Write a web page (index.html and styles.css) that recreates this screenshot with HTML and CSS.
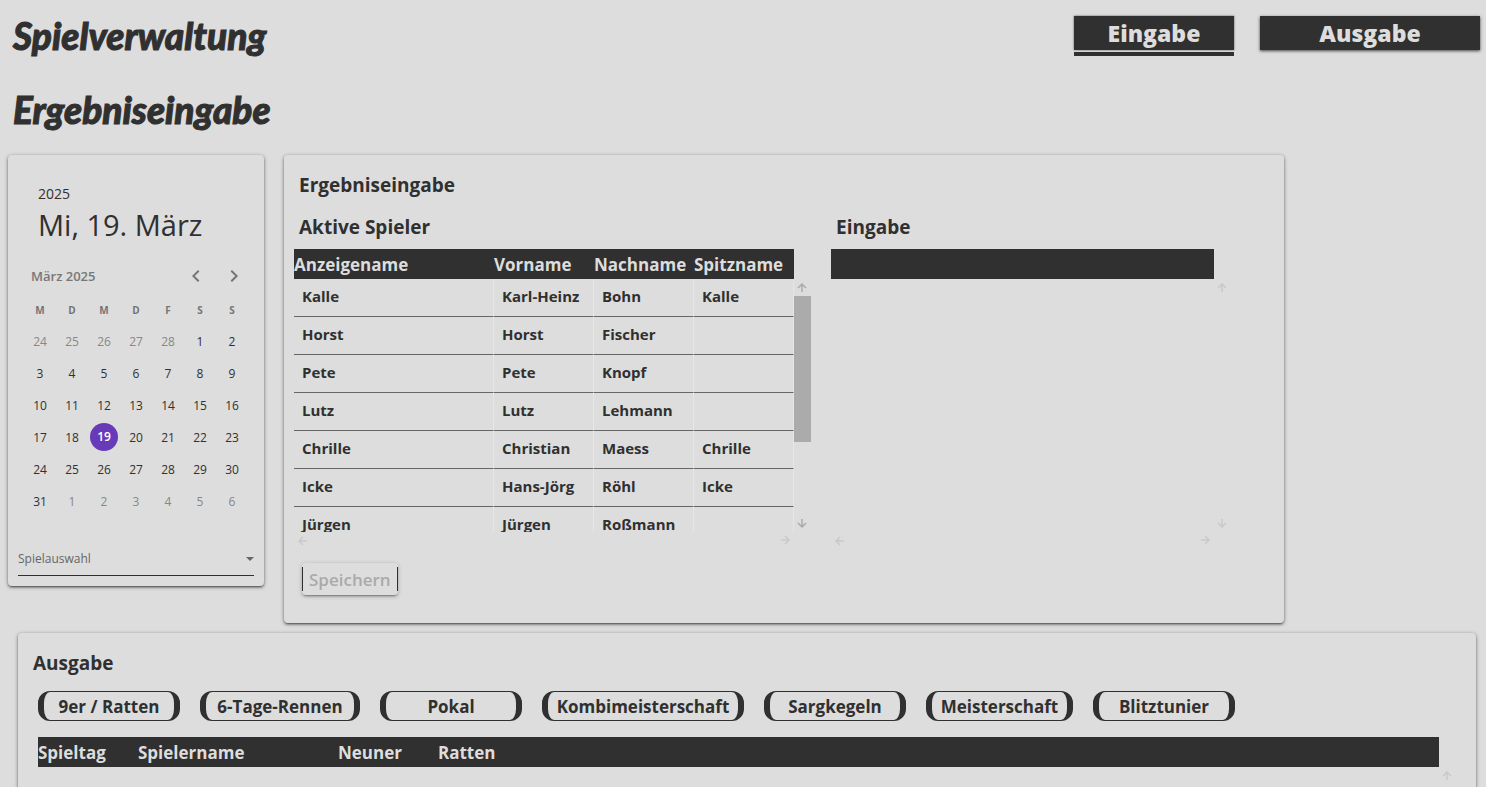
FILE: index.html
```html
<!DOCTYPE html>
<html lang="de">
<head>
<meta charset="utf-8">
<title>Spielverwaltung</title>
<link rel="stylesheet" href="styles.css">
</head>
<body>
<svg class="symbols" aria-hidden="true">
  <symbol id="arrow" viewBox="0 0 17 17"><path d="M8 13V5M4 9l4-4 4 4" fill="none" stroke="currentColor" stroke-width="1.5"/></symbol>
</svg>
<header class="top">
  <h1 class="title">Spielverwaltung</h1>
  <nav class="nav">
    <a class="tab tab-active" href="#eingabe"><span class="tab-face">Eingabe</span></a>
    <a class="tab tab-wide" href="#ausgabe"><span class="tab-face">Ausgabe</span></a>
  </nav>
</header>
<h2 class="title">Ergebniseingabe</h2>
<main>
  <div class="row">
    <section class="card calendar">
      <div class="date-head">
        <div class="year">2025</div>
        <div class="date">Mi, 19. März</div>
      </div>
      <div class="month-bar">
        <span class="month">März 2025</span>
        <button class="step" aria-label="Voriger Monat"><svg width="24" height="24" viewBox="0 0 24 24"><path d="M15.4 7.4 14 6l-6 6 6 6 1.4-1.4L10.8 12z"/></svg></button>
        <button class="step" aria-label="Nächster Monat"><svg width="24" height="24" viewBox="0 0 24 24"><path d="M10 6 8.600 7.400 13.200 12l-4.600 4.600L10 18l6-6z"/></svg></button>
      </div>
      <table class="days">
        <thead><tr><th>M</th><th>D</th><th>M</th><th>D</th><th>F</th><th>S</th><th>S</th></tr></thead>
        <tbody>
          <tr><td class="out">24</td><td class="out">25</td><td class="out">26</td><td class="out">27</td><td class="out">28</td><td>1</td><td>2</td></tr>
          <tr><td>3</td><td>4</td><td>5</td><td>6</td><td>7</td><td>8</td><td>9</td></tr>
          <tr><td>10</td><td>11</td><td>12</td><td>13</td><td>14</td><td>15</td><td>16</td></tr>
          <tr><td>17</td><td>18</td><td><span class="today">19</span></td><td>20</td><td>21</td><td>22</td><td>23</td></tr>
          <tr><td>24</td><td>25</td><td>26</td><td>27</td><td>28</td><td>29</td><td>30</td></tr>
          <tr><td>31</td><td class="out">1</td><td class="out">2</td><td class="out">3</td><td class="out">4</td><td class="out">5</td><td class="out">6</td></tr>
        </tbody>
      </table>
      <div class="picker">
        <select class="select" aria-label="Spielauswahl"><option>Spielauswahl</option></select>
        <svg class="caret" width="8" height="4" viewBox="0 0 8 4"><path d="M0 0h8L4 4z"/></svg>
      </div>
    </section>
    <section class="card entry" id="eingabe">
      <h3 class="heading">Ergebniseingabe</h3>
      <div class="panels">
        <div class="panel">
          <h3 class="heading">Aktive Spieler</h3>
          <div class="grid">
            <div class="view">
              <table class="players">
                <colgroup><col class="col-wide"><col><col><col></colgroup>
                <thead><tr><th>Anzeigename</th><th>Vorname</th><th>Nachname</th><th>Spitzname</th></tr></thead>
                <tbody>
                  <tr><td>Kalle</td><td>Karl-Heinz</td><td>Bohn</td><td>Kalle</td></tr>
                  <tr><td>Horst</td><td>Horst</td><td>Fischer</td><td></td></tr>
                  <tr><td>Pete</td><td>Pete</td><td>Knopf</td><td></td></tr>
                  <tr><td>Lutz</td><td>Lutz</td><td>Lehmann</td><td></td></tr>
                  <tr><td>Chrille</td><td>Christian</td><td>Maess</td><td>Chrille</td></tr>
                  <tr><td>Icke</td><td>Hans-Jörg</td><td>Röhl</td><td>Icke</td></tr>
                  <tr><td>Jürgen</td><td>Jürgen</td><td>Roßmann</td><td></td></tr>
                </tbody>
              </table>
            </div>
            <div class="vbar vbar-on"><svg class="arrow"><use href="#arrow"/></svg><div class="track"><div class="thumb"></div></div><svg class="arrow down"><use href="#arrow"/></svg></div>
            <div class="hbar"><svg class="arrow left"><use href="#arrow"/></svg><svg class="arrow right"><use href="#arrow"/></svg></div>
          </div>
        </div>
        <div class="panel panel-input">
          <h3 class="heading">Eingabe</h3>
          <div class="grid">
            <div class="view"><div class="bar"></div></div>
            <div class="vbar"><svg class="arrow"><use href="#arrow"/></svg><svg class="arrow down"><use href="#arrow"/></svg></div>
            <div class="hbar"><svg class="arrow left"><use href="#arrow"/></svg><svg class="arrow right"><use href="#arrow"/></svg></div>
          </div>
        </div>
      </div>
      <button class="save" disabled>Speichern</button>
    </section>
  </div>
  <section class="card output" id="ausgabe">
    <h3 class="heading">Ausgabe</h3>
    <div class="modes">
      <button class="mode">9er / Ratten</button>
      <button class="mode mode-long">6-Tage-Rennen</button>
      <button class="mode">Pokal</button>
      <button class="mode mode-xlong">Kombimeisterschaft</button>
      <button class="mode">Sargkegeln</button>
      <button class="mode mode-mid">Meisterschaft</button>
      <button class="mode">Blitztunier</button>
    </div>
    <div class="grid grid-output">
      <div class="view">
        <table class="results">
          <colgroup><col class="col-100"><col class="col-wide"><col class="col-100"><col></colgroup>
          <thead><tr><th>Spieltag</th><th>Spielername</th><th>Neuner</th><th>Ratten</th></tr></thead>
        </table>
      </div>
      <div class="vbar"><svg class="arrow"><use href="#arrow"/></svg><svg class="arrow down"><use href="#arrow"/></svg></div>
    </div>
  </section>
</main>
</body>
</html>
```

FILE: styles.css
```css
:root {
  --bg: #ddd;
  --ink: #303030;
  --shadow: 0 3px 1px -2px rgba(0,0,0,.2), 0 2px 2px 0 rgba(0,0,0,.14), 0 1px 5px 0 rgba(0,0,0,.2);
}
* { box-sizing: border-box; }
html, body { height: 100%; overflow: hidden; }
body {
  margin: 0;
  background: var(--bg);
  color: var(--ink);
  font-family: "Segoe UI", "Open Sans", "Noto Sans", sans-serif;
}
h1, h2, h3 { margin: 0; }
table { border-collapse: separate; border-spacing: 0; table-layout: fixed; width: 100%; }
th, td { padding: 0; }
button, select { font-family: inherit; color: inherit; }
.symbols { position: absolute; width: 0; height: 0; }

.top { display: flex; justify-content: space-between; height: 74px; }
.title {
  padding-left: 13px;
  font: italic 900 37px/72px Forte, "Lato", sans-serif;
  -webkit-text-stroke: 1px var(--ink);
}
h2.title { height: 74px; }
.nav { display: flex; gap: 26px; padding: 16px 6px 0 0; }
.tab {
  width: 160px;
  height: 40px;
  color: var(--bg);
  text-decoration: none;
  text-align: center;
  font-size: 23px;
  font-weight: 800;
  line-height: 34px;
}
.tab-wide { width: 220px; }
.tab-active { border-bottom: 4px solid var(--ink); }
.tab-face {
  display: block;
  background: var(--ink);
  box-shadow: 0 1px 3px rgba(0,0,0,.7);
}
.tab-active .tab-face { box-shadow: 0 0 2px rgba(0,0,0,.6); }

.card { border-radius: 4px; background: var(--bg); box-shadow: var(--shadow), 0 1px 3px rgba(0,0,0,.35); }
.row { display: flex; align-items: flex-start; gap: 20px; padding: 7px 8px 0; }
.calendar { width: 256px; height: 431px; padding: 26px 10px 10px; }
.date-head { padding-left: 20px; }
.year { font-size: 14px; line-height: 26px; }
.date { font-size: 29px; line-height: 36px; }
.month-bar { display: flex; align-items: center; height: 40px; margin-top: 13px; padding: 0 1px 0 13px; }
.month { flex: 1; font-size: 13px; font-weight: 600; color: #777; }
.step { width: 38px; height: 40px; padding: 0; border: 0; background: none; }
.step svg { display: block; margin: auto; fill: #757575; }
.days { width: 224px; margin: 0 6px; text-align: center; font-size: 12px; }
.days th { height: 29px; padding-bottom: 2px; font-size: 10px; font-weight: 700; color: #757575; }
.days td { height: 32px; }
.days .out { color: #888; }
.today {
  display: block;
  width: 28px;
  margin: auto;
  border-radius: 50%;
  background: #673ab7;
  color: #fff;
  font-weight: 600;
  line-height: 28px;
}
.picker { position: relative; margin-top: 25px; }
.select {
  display: block;
  width: 100%;
  height: 34px;
  padding: 0;
  border: 0;
  border-bottom: 1px solid var(--ink);
  border-radius: 0;
  background: none;
  appearance: none;
  color: #666;
  font-size: 12px;
}
.caret { position: absolute; right: 0; top: 15px; fill: #666; pointer-events: none; }

.entry { flex: 0 1 1000px; height: 468px; padding: 10px; }
.heading { height: 42px; padding-left: 5px; font-size: 19px; font-weight: 700; line-height: 40px; }
.panels { display: flex; gap: 20px; }
.panel { width: 517px; }
.panel-input { width: 400px; }
.grid { display: grid; grid-template-columns: 1fr 17px; grid-template-rows: 283px 17px; }
.view { overflow: hidden; }
.bar { height: 30px; background: var(--ink); }
.players th, .results th {
  height: 30px;
  padding-top: 2px;
  background: var(--ink);
  color: var(--bg);
  text-align: left;
  font-size: 17px;
  font-weight: 700;
  line-height: 28px;
}
.col-wide { width: 200px; }
.col-100 { width: 100px; }
.players td {
  height: 38px;
  padding: 0 0 4px 8px;
  border-right: 1px solid #e6e6e6;
  border-bottom: 1px solid #666;
  font-size: 15px;
  font-weight: 700;
  line-height: 20px;
  white-space: nowrap;
}
.vbar { display: flex; flex-direction: column; justify-content: space-between; padding-top: 30px; color: #c9c9c9; }
.vbar-on { color: #aaa; }
.hbar { display: flex; justify-content: space-between; color: #c9c9c9; }
.arrow { display: block; width: 17px; height: 17px; }
.down { transform: scaleY(-1); }
.left { transform: rotate(-90deg); }
.right { transform: rotate(90deg); }
.track { flex: 1; }
.thumb { height: 146px; background: #ababab; }
.save {
  display: block;
  height: 32px;
  margin: 14px 0 0 8px;
  padding: 0 7px;
  border: 0;
  border-radius: 4px;
  background:
    linear-gradient(var(--ink), var(--ink)) left center / 1px 24px no-repeat,
    linear-gradient(var(--ink), var(--ink)) right center / 1px 24px no-repeat,
    var(--bg);
  box-shadow: var(--shadow);
  color: #aaa;
  font-size: 17px;
  font-weight: 600;
}

.output { height: 400px; margin: 10px 10px 0 18px; padding: 10px; }
.output .heading { height: 40px; }
.modes { display: flex; gap: 20px; padding: 8px 10px 16px; }
.mode {
  width: 142px;
  height: 30px;
  padding: 0;
  border: solid var(--ink);
  border-width: 1px 6px;
  border-radius: 12px;
  background: none;
  font-size: 17px;
  font-weight: 700;
  white-space: nowrap;
}
.mode-mid { width: 147px; }
.mode-long { width: 160px; }
.mode-xlong { width: 202px; }
.grid-output { margin: 0 10px; }
```
